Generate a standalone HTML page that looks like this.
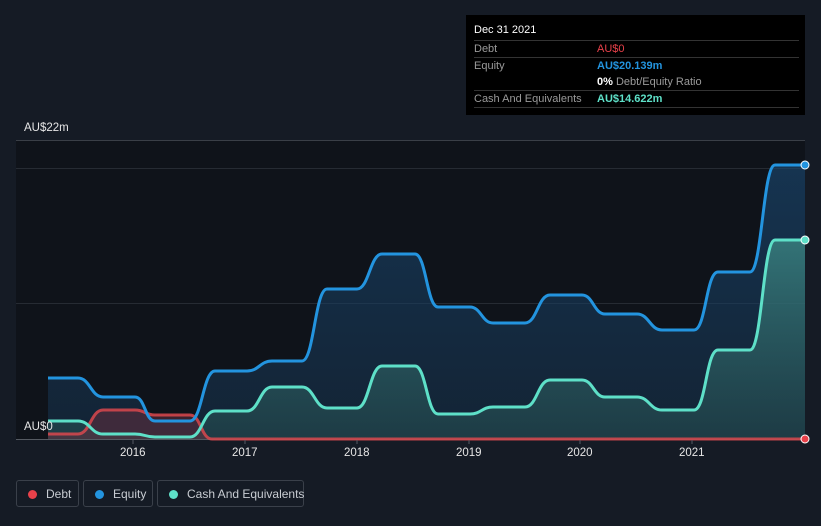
<!DOCTYPE html>
<html><head><meta charset="utf-8"><style>
body{margin:0;width:821px;height:526px;background:#151b25;font-family:"Liberation Sans",sans-serif;overflow:hidden;position:relative}
.tt{position:absolute;left:466px;top:15px;width:339px;height:100px;background:#000;color:#fff;font-size:11px}
.row{position:absolute;left:8px;right:6px;border-top:1px solid #333;height:17px;line-height:17px;color:#9a9a9a}
.row span{position:absolute;left:123px}
.leg{position:absolute;top:480px;height:27px;border:1px solid #3a404a;border-radius:3px;color:#c8ccd2;font-size:12px;line-height:26px;box-sizing:border-box;white-space:nowrap}
.dot{display:inline-block;width:9px;height:9px;border-radius:50%;margin:0 9px 0 11px;vertical-align:-1px}
.ax{position:absolute;color:#e6e6e6;font-size:11.5px}
</style></head><body>
<svg width="821" height="526" style="position:absolute;left:0;top:0">
<defs>
<linearGradient id="ge" x1="0" y1="0" x2="0" y2="1"><stop offset="0" stop-color="#1a4a75" stop-opacity=".6"/><stop offset="1" stop-color="#173450" stop-opacity=".5"/></linearGradient>
<linearGradient id="gc" x1="0" y1="0" x2="0" y2="1"><stop offset="0" stop-color="#3d8a86" stop-opacity=".75"/><stop offset="1" stop-color="#2a5858" stop-opacity=".45"/></linearGradient>
</defs>
<rect x="16" y="140" width="789" height="299" fill="#0f131a"/>
<line x1="16" y1="140.5" x2="805" y2="140.5" stroke="#3a3f47"/>
<line x1="16" y1="168.5" x2="805" y2="168.5" stroke="#262b33"/>
<line x1="16" y1="303.5" x2="805" y2="303.5" stroke="#262b33"/>
<path d="M48,378 L78,378 C90,378 91,397 103,397 L135,397 C145,397 145,421 155,421 L190,421 C202,421 203,371 215,371 L247,371 C259,371 260,361 272,361 L302,361 C314,361 315,289 327,289 L357,289 C369,289 370,254 382,254 L415,254 C426,254 427,307 438,307 L470,307 C481,307 482,323 493,323 L525,323 C537,323 538,295 550,295 L582,295 C593,295 594,314 605,314 L637,314 C649,314 650,330 662,330 L694,330 C706,330 706,272 718,272 L750,272 C762,272 763,165 775,165 L805,165 L805,439 L48,439Z" fill="url(#ge)"/>
<path d="M48,421 L78,421 C90,421 91,434 103,434 L135,434 C145,434 145,437 155,437 L190,437 C202,437 203,411 215,411 L247,411 C259,411 260,387 272,387 L302,387 C314,387 315,408 327,408 L357,408 C369,408 370,366 382,366 L415,366 C426,366 427,414 438,414 L470,414 C481,414 482,407 493,407 L525,407 C537,407 538,380 550,380 L582,380 C593,380 594,397 605,397 L637,397 C649,397 650,410 662,410 L694,410 C706,410 706,350 718,350 L750,350 C762,350 763,240 775,240 L805,240 L805,439 L48,439Z" fill="url(#gc)"/>
<path d="M48,434 L78,434 C90,434 91,410 103,410 L135,410 C145,410 145,415 155,415 L190,415 C201,415 201,439 212,439 L48,439Z" fill="#6a3040" fill-opacity=".5"/>
<line x1="16" y1="439.5" x2="805" y2="439.5" stroke="#555a62"/>
<g stroke-width="3" fill="none">
<path d="M48,434 L78,434 C90,434 91,410 103,410 L135,410 C145,410 145,415 155,415 L190,415 C201,415 201,439 212,439 L805,439" stroke="#d9484e" stroke-opacity=".85"/>
<path d="M48,378 L78,378 C90,378 91,397 103,397 L135,397 C145,397 145,421 155,421 L190,421 C202,421 203,371 215,371 L247,371 C259,371 260,361 272,361 L302,361 C314,361 315,289 327,289 L357,289 C369,289 370,254 382,254 L415,254 C426,254 427,307 438,307 L470,307 C481,307 482,323 493,323 L525,323 C537,323 538,295 550,295 L582,295 C593,295 594,314 605,314 L637,314 C649,314 650,330 662,330 L694,330 C706,330 706,272 718,272 L750,272 C762,272 763,165 775,165 L805,165" stroke="#2394df"/>
<path d="M48,421 L78,421 C90,421 91,434 103,434 L135,434 C145,434 145,437 155,437 L190,437 C202,437 203,411 215,411 L247,411 C259,411 260,387 272,387 L302,387 C314,387 315,408 327,408 L357,408 C369,408 370,366 382,366 L415,366 C426,366 427,414 438,414 L470,414 C481,414 482,407 493,407 L525,407 C537,407 538,380 550,380 L582,380 C593,380 594,397 605,397 L637,397 C649,397 650,410 662,410 L694,410 C706,410 706,350 718,350 L750,350 C762,350 763,240 775,240 L805,240" stroke="#5ee0c8"/>
</g>
<circle cx="805" cy="165" r="4" fill="#2394df" stroke="#fff" stroke-width="1"/>
<circle cx="805" cy="240" r="4" fill="#5ee0c8" stroke="#fff" stroke-width="1"/>
<circle cx="805" cy="439" r="4" fill="#e8414a" stroke="#fff" stroke-width="1"/>
<g stroke="#555a62"><line x1="133" y1="440" x2="133" y2="444"/><line x1="245" y1="440" x2="245" y2="444"/><line x1="357" y1="440" x2="357" y2="444"/><line x1="469" y1="440" x2="469" y2="444"/><line x1="580" y1="440" x2="580" y2="444"/><line x1="692" y1="440" x2="692" y2="444"/></g>
</svg>
<div class="ax" style="left:24px;top:122px">AU$22m</div>
<div class="ax" style="left:24px;top:421px">AU$0</div>
<div class="ax" style="left:120px;top:447px">2016</div>
<div class="ax" style="left:232px;top:447px">2017</div>
<div class="ax" style="left:344px;top:447px">2018</div>
<div class="ax" style="left:456px;top:447px">2019</div>
<div class="ax" style="left:567px;top:447px">2020</div>
<div class="ax" style="left:679px;top:447px">2021</div>
<div class="tt">
<div style="position:absolute;left:8px;top:9px;font-size:11px">Dec 31 2021</div>
<div class="row" style="top:25px">Debt<span style="color:#e8414a">AU$0</span></div>
<div class="row" style="top:42px">Equity<span style="color:#2394df;font-weight:bold">AU$20.139m</span></div>
<div class="row" style="top:59px;border-top:none"><span><b style="color:#fff">0%</b> Debt/Equity Ratio</span></div>
<div class="row" style="top:75px">Cash And Equivalents<span style="color:#5ee0c8;font-weight:bold">AU$14.622m</span></div>
<div style="position:absolute;left:8px;right:6px;top:92px;border-top:1px solid #333"></div>
</div>
<div class="leg" style="left:16px;width:63px"><span class="dot" style="background:#e8414a"></span>Debt</div>
<div class="leg" style="left:83px;width:70px"><span class="dot" style="background:#2394df"></span>Equity</div>
<div class="leg" style="left:157px;width:147px"><span class="dot" style="background:#5ee0c8"></span>Cash And Equivalents</div>
</body></html>
